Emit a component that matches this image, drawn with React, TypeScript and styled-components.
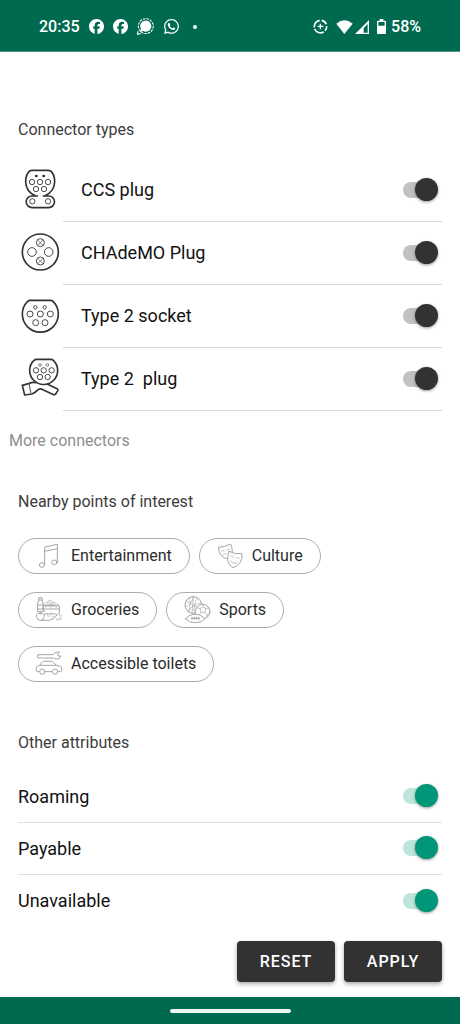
import React from "react";
import styled, { createGlobalStyle } from "styled-components";
import { FaFacebook, FaWhatsapp } from "react-icons/fa6";

const Global = createGlobalStyle`
  *, *::before, *::after { box-sizing: border-box; }
  body { margin: 0; background: #fff; font-family: Roboto, "Liberation Sans", sans-serif; color: #111; }
`;

const Screen = styled.div`
  min-height: 100vh;
  display: flex;
  flex-direction: column;
`;

const StatusBar = styled.header`
  height: 52px;
  padding: 2px 39px 0;
  display: flex;
  align-items: center;
  justify-content: space-between;
  background: #006a50;
  border-bottom: 1px solid #4d9785;
  color: #fff;
  font-size: 16px;
  font-weight: 500;
`;

const StatusGroup = styled.div<{ $gap: number }>`
  display: flex;
  align-items: center;
  gap: ${(p) => p.$gap}px;
`;

const StatusDot = styled.span`
  width: 4px;
  height: 4px;
  margin-left: 4px;
  border-radius: 50%;
  background: #fff;
`;

const Content = styled.main`
  flex: 1;
  padding: 68px 18px 0;
`;

const Heading = styled.h2`
  margin: 0;
  font-size: 16px;
  line-height: 20px;
  font-weight: 400;
  color: #3c3c3c;
`;

const List = styled.ul`
  list-style: none;
  margin: 0;
  padding: 0;
`;

const ConnectorList = styled(List)`
  margin-top: 19px;
`;

const ConnectorRow = styled.li`
  height: 63px;
  display: flex;
  gap: 3px;
`;

const ConnectorIcon = styled.svg`
  flex: none;
  width: 40px;
  height: 40px;
  margin: 10px 0 0 2px;
  fill: none;
  stroke: #333;
  stroke-width: 5;
  stroke-linejoin: round;

  .pin { stroke: #4a4a4a; stroke-width: 3; }
  .thin { stroke-width: 2; }
`;

const RowBody = styled.div`
  flex: 1;
  display: flex;
  align-items: center;
  justify-content: space-between;
  padding: 0 4px 0 18px;
  border-bottom: 1px solid #d9d9d9;
`;

const AttributeRow = styled.li`
  height: 52px;
  display: flex;
  align-items: center;
  justify-content: space-between;
  padding-right: 4px;

  &:not(:last-child) { border-bottom: 1px solid #dedede; }
`;

const RowLabel = styled.label`
  font-size: 18px;
  line-height: 24px;
  color: #111;
  white-space: pre;
`;

const Switch = styled.input<{ $thumb: string; $track: string }>`
  appearance: none;
  position: relative;
  width: 35px;
  height: 23px;
  margin: 0 0 2px;
  cursor: pointer;

  &::before {
    content: "";
    position: absolute;
    inset: 4px 3px 3px 0;
    border-radius: 8px;
    background: ${(p) => p.$track};
  }
  &::after {
    content: "";
    position: absolute;
    top: 0;
    left: 0;
    width: 23px;
    height: 23px;
    border-radius: 50%;
    background: #f1f1f1;
    box-shadow: 0 1px 3px rgba(0, 0, 0, 0.4);
  }
  &:checked::after {
    left: 12px;
    background: ${(p) => p.$thumb};
  }
`;

const MoreButton = styled.button`
  display: block;
  margin: 20px 0 0 -9px;
  padding: 0;
  border: 0;
  background: none;
  font: inherit;
  font-size: 16px;
  line-height: 20px;
  color: #8e8e8e;
`;

const PoiHeading = styled(Heading)`
  margin-top: 41px;
`;

const Chips = styled.div`
  display: flex;
  flex-wrap: wrap;
  gap: 18px 9px;
  margin-top: 26px;
  max-width: 360px;
`;

const Chip = styled.button`
  height: 36px;
  display: flex;
  align-items: center;
  gap: 9px;
  padding: 0 17px;
  border: 1px solid #adadad;
  border-radius: 18px;
  background: #fff;
  font: inherit;
  font-size: 16px;
  line-height: 20px;
  color: #2b2b2b;
`;

const ChipIcon = styled.svg`
  width: 26px;
  height: 26px;
  overflow: visible;
  fill: none;
  stroke: #a6a6a6;
  stroke-width: 3;
  stroke-linejoin: round;
  stroke-linecap: round;

  .fine { stroke-width: 2; }
  .solid { fill: #fff; }
`;

const AttributesHeading = styled(Heading)`
  margin-top: 51px;
`;

const AttributeList = styled(List)`
  margin-top: 18px;
`;

const Actions = styled.div`
  display: flex;
  justify-content: flex-end;
  gap: 9px;
  padding: 14px 18px 15px;
`;

const ActionButton = styled.button`
  width: 98px;
  height: 41px;
  padding: 0;
  border: 0;
  border-radius: 4px;
  background: #323232;
  box-shadow: 0 2px 4px rgba(0, 0, 0, 0.35);
  color: #fff;
  font: inherit;
  font-size: 16px;
  font-weight: 500;
  letter-spacing: 1px;
`;

const NavBar = styled.footer`
  height: 27px;
  display: flex;
  align-items: center;
  justify-content: center;
  background: #006a50;
`;

const HomeHandle = styled.span`
  width: 121px;
  height: 4px;
  border-radius: 2px;
  background: #eef5f3;
`;

const CcsIcon = () => (
  <ConnectorIcon viewBox="0 0 120 120" aria-hidden="true">
    <path d="M54 81H36a17 17 0 0 0 0 35H86a17 17 0 0 0 0-35H68M47 81C28 72 17 58 17 38C17 24 21 13 29 6Q32 4 36 4H84Q88 4 92 6C100 13 104 24 104 38C104 58 92 72 74 81" />
    <circle cx="49" cy="21" r="4" fill="#222" stroke="none" />
    <circle cx="71" cy="21" r="4" fill="#222" stroke="none" />
    {[[36, 39], [60, 39], [84, 39], [48, 60], [72, 60], [37, 97], [84, 97]].map(([x, y]) => (
      <circle key={`${x}-${y}`} className="pin" cx={x} cy={y} r="8" />
    ))}
  </ConnectorIcon>
);

const ChademoIcon = () => (
  <ConnectorIcon viewBox="0 0 120 120" aria-hidden="true">
    <circle cx="61" cy="60" r="54" />
    <circle className="pin" cx="36" cy="60" r="13" />
    <circle className="pin" cx="86" cy="60" r="13" />
    <g className="pin">
      <circle cx="61" cy="32" r="12" />
      <circle cx="61" cy="87" r="12" />
      <path className="thin" d="M53 24l16 16M69 24l-16 16M53 79l16 16M69 79l-16 16" />
    </g>
  </ConnectorIcon>
);

const SocketIcon = () => (
  <ConnectorIcon viewBox="0 0 120 120" aria-hidden="true">
    <path d="M23 19Q26 16 30 16H92Q96 16 99 19A54 54 0 1 1 23 19Z" />
    <g className="pin">
      <circle cx="46" cy="37" r="5" />
      <circle cx="74" cy="37" r="5" />
      <circle cx="30" cy="57" r="9" />
      <circle cx="61" cy="57" r="9" />
      <circle cx="91" cy="57" r="9" />
      <circle cx="47" cy="83" r="9" />
      <circle cx="75" cy="83" r="9" />
    </g>
  </ConnectorIcon>
);

const PlugIcon = () => (
  <ConnectorIcon viewBox="0 0 120 120" aria-hidden="true">
    <path d="M42 7Q45 4 49 4H93Q97 4 100 7A42 42 0 1 1 42 7Z" />
    <g className="pin">
      <circle className="thin" cx="60" cy="21" r="4" />
      <circle className="thin" cx="82" cy="21" r="4" />
      <circle cx="48" cy="37" r="8" />
      <circle cx="71" cy="37" r="8" />
      <circle cx="95" cy="37" r="8" />
      <circle cx="60" cy="57" r="8" />
      <circle cx="83" cy="57" r="8" />
    </g>
    <path d="M28 76L7 82L14 111L36 108Q45 105 51 98Q59 89 69 95L101 110Q105 111 107 108L114 97Q115 94 111 92L80 77M28 76Q38 71 50 74" />
    <path className="pin" d="M27 77L33 107" />
  </ConnectorIcon>
);

const MusicIcon = () => (
  <ChipIcon viewBox="0 0 78 78" aria-hidden="true">
    <path d="M26 65V12L64 4V57M26 25L64 17" />
    <ellipse cx="18" cy="66" rx="8" ry="7" />
    <ellipse cx="55" cy="58" rx="8" ry="7" />
  </ChipIcon>
);

const MasksIcon = () => (
  <ChipIcon viewBox="0 0 78 78" aria-hidden="true">
    <path d="M29 47Q18 46 12 37Q5 27 4 13Q24 12 41 3Q46 12 46 27" />
    <path d="M36 25Q54 35 75 32Q76 48 70 58Q61 72 48 74Q35 67 32 52Q31 38 36 25Z" />
    <path className="fine" d="M12 25q4-5 9-1M29 20q4-4 8-1M16 37q5-6 12-5M41 40q5-3 9 2M58 45q5-3 9 1M40 54q8 10 20 6" />
  </ChipIcon>
);

const GroceriesIcon = () => (
  <ChipIcon viewBox="0 0 78 78" aria-hidden="true">
    <path d="M9 2H18V9H9ZM9 9L5 18V44H21V18L18 9M5 24H21M5 36H21M25 44L21 26H70V46M21 36H70" />
    <g className="fine">
      <path d="M24 26Q25 14 33 18Q35 7 43 12Q50 9 49 18Q57 13 61 20Q68 20 66 26M30 26Q33 17 39 25Q43 14 49 25Q54 17 60 25M38 16l5 8M49 18l-5 8M28 30l8-5 8 6 8-6 9 6" />
      <path d="M10 45L17 44M34 52l3 7M47 51l-4 7M54 57l-6 4M63 54l6-7 1 8 7 1-5 5 4 6-8-2-3 7-4-8" />
    </g>
    <path d="M13 50Q1 46 1 58Q2 69 13 70Q25 69 25 58Q25 46 13 50ZM13 50V46M25 52Q33 46 39 52Q45 45 52 51Q59 49 63 54Q55 68 38 70L15 70" />
  </ChipIcon>
);

const SportsIcon = () => (
  <ChipIcon viewBox="0 0 78 78" aria-hidden="true">
    <circle cx="28" cy="24" r="25" />
    <path className="fine" d="M6 12L50 37M16 2Q22 18 15 45M28 0L24 49M40 3Q27 22 31 48M4 30Q22 24 29 0M52 18Q32 20 11 42" />
    <circle className="solid" cx="56" cy="44" r="22" />
    <path className="fine" d="M49 34L58 29L66 35L63 46H52ZM58 29V22M66 35L75 33M63 46L70 55M52 46L45 54M49 34L38 33M70 55L77 47M70 55L65 64" />
    <path className="solid" d="M5 66Q14 52 34 52Q53 52 62 66Q54 77 34 77Q14 77 5 66Z" />
    <path d="M22 64H46M24 61V67M31 61V67M38 61V67M45 61V67" />
  </ChipIcon>
);

const CarIcon = () => (
  <ChipIcon viewBox="0 0 78 78" aria-hidden="true">
    <path d="M8 11H52Q56 3 65 3L71 4L64 9L66 15L75 15Q71 25 62 24Q56 24 52 21H8Q4 21 4 16Q4 11 8 11Z" />
    <path d="M10 62H4Q1 62 1 58V49Q3 45 12 43L17 34Q19 31 23 31H45Q49 31 52 34L61 43Q73 44 77 49V58Q77 62 74 62H66M28 62H48M12 43H61" />
    <circle cx="19" cy="62" r="8" />
    <circle cx="57" cy="62" r="8" />
  </ChipIcon>
);

const SignalIcon = () => (
  <svg width="17" height="17" viewBox="0 0 48 48" aria-hidden="true">
    <circle cx="25" cy="23" r="21" fill="none" stroke="#fff" strokeWidth="3" strokeDasharray="7 3" />
    <path d="M25 7a16 16 0 1 1-8 30l-9 3 3-9A16 16 0 0 1 25 7Z" fill="#fff" />
    <path d="M3 37L1 46L11 44" fill="none" stroke="#fff" strokeWidth="3" />
  </svg>
);

const SaverIcon = () => (
  <svg width="15" height="15" viewBox="0 0 45 45" fill="none" stroke="#fff" aria-hidden="true">
    <path d="M26 4a19 19 0 0 1 14 12M41 22a19 19 0 0 1-5 13M32 39A19 19 0 0 1 5 30M4 25A19 19 0 0 1 20 4" strokeWidth="5" />
    <path d="M22 14V31M14 22H31" strokeWidth="4" />
  </svg>
);

const WifiIcon = () => (
  <svg width="17" height="14" viewBox="0 0 51 42" aria-hidden="true">
    <path d="M1 11Q25-9 50 11L25 42Z" fill="#fff" />
  </svg>
);

const CellIcon = () => (
  <svg width="14" height="14" viewBox="0 0 42 42" aria-hidden="true">
    <path d="M42 0V42H0ZM38 12L26 24V38H38Z" fill="#fff" fillRule="evenodd" />
  </svg>
);

const BatteryIcon = () => (
  <svg width="9" height="15" viewBox="0 0 27 45" aria-hidden="true">
    <path d="M8 0H19V5H24Q27 5 27 8V42Q27 45 24 45H3Q0 45 0 42V8Q0 5 3 5H8ZM4 9V20H23V9Z" fill="#fff" fillRule="evenodd" />
  </svg>
);

const connectors = [
  { id: "ccs", label: "CCS plug", Icon: CcsIcon },
  { id: "chademo", label: "CHAdeMO Plug", Icon: ChademoIcon },
  { id: "type2-socket", label: "Type 2 socket", Icon: SocketIcon },
  { id: "type2-plug", label: "Type 2  plug", Icon: PlugIcon },
];

const places = [
  { label: "Entertainment", Icon: MusicIcon },
  { label: "Culture", Icon: MasksIcon },
  { label: "Groceries", Icon: GroceriesIcon },
  { label: "Sports", Icon: SportsIcon },
  { label: "Accessible toilets", Icon: CarIcon },
];

const attributes = ["Roaming", "Payable", "Unavailable"];

export default function App() {
  return (
    <Screen>
      <Global />
      <StatusBar>
        <StatusGroup $gap={9}>
          <span>20:35</span>
          <FaFacebook size={15} />
          <FaFacebook size={15} />
          <SignalIcon />
          <FaWhatsapp size={17} />
          <StatusDot />
        </StatusGroup>
        <StatusGroup $gap={8}>
          <SaverIcon />
          <StatusGroup $gap={2}>
            <WifiIcon />
            <CellIcon />
          </StatusGroup>
          <StatusGroup $gap={5}>
            <BatteryIcon />
            <span>58%</span>
          </StatusGroup>
        </StatusGroup>
      </StatusBar>
      <Content>
        <Heading>Connector types</Heading>
        <ConnectorList>
          {connectors.map(({ id, label, Icon }) => (
            <ConnectorRow key={id}>
              <Icon />
              <RowBody>
                <RowLabel htmlFor={id}>{label}</RowLabel>
                <Switch id={id} type="checkbox" defaultChecked $thumb="#323232" $track="#c1c1c1" />
              </RowBody>
            </ConnectorRow>
          ))}
        </ConnectorList>
        <MoreButton type="button">More connectors</MoreButton>
        <PoiHeading>Nearby points of interest</PoiHeading>
        <Chips>
          {places.map(({ label, Icon }) => (
            <Chip key={label} type="button">
              <Icon />
              {label}
            </Chip>
          ))}
        </Chips>
        <AttributesHeading>Other attributes</AttributesHeading>
        <AttributeList>
          {attributes.map((name) => (
            <AttributeRow key={name}>
              <RowLabel htmlFor={name}>{name}</RowLabel>
              <Switch id={name} type="checkbox" defaultChecked $thumb="#009678" $track="#bce5dc" />
            </AttributeRow>
          ))}
        </AttributeList>
      </Content>
      <Actions>
        <ActionButton type="button">RESET</ActionButton>
        <ActionButton type="button">APPLY</ActionButton>
      </Actions>
      <NavBar>
        <HomeHandle />
      </NavBar>
    </Screen>
  );
}
